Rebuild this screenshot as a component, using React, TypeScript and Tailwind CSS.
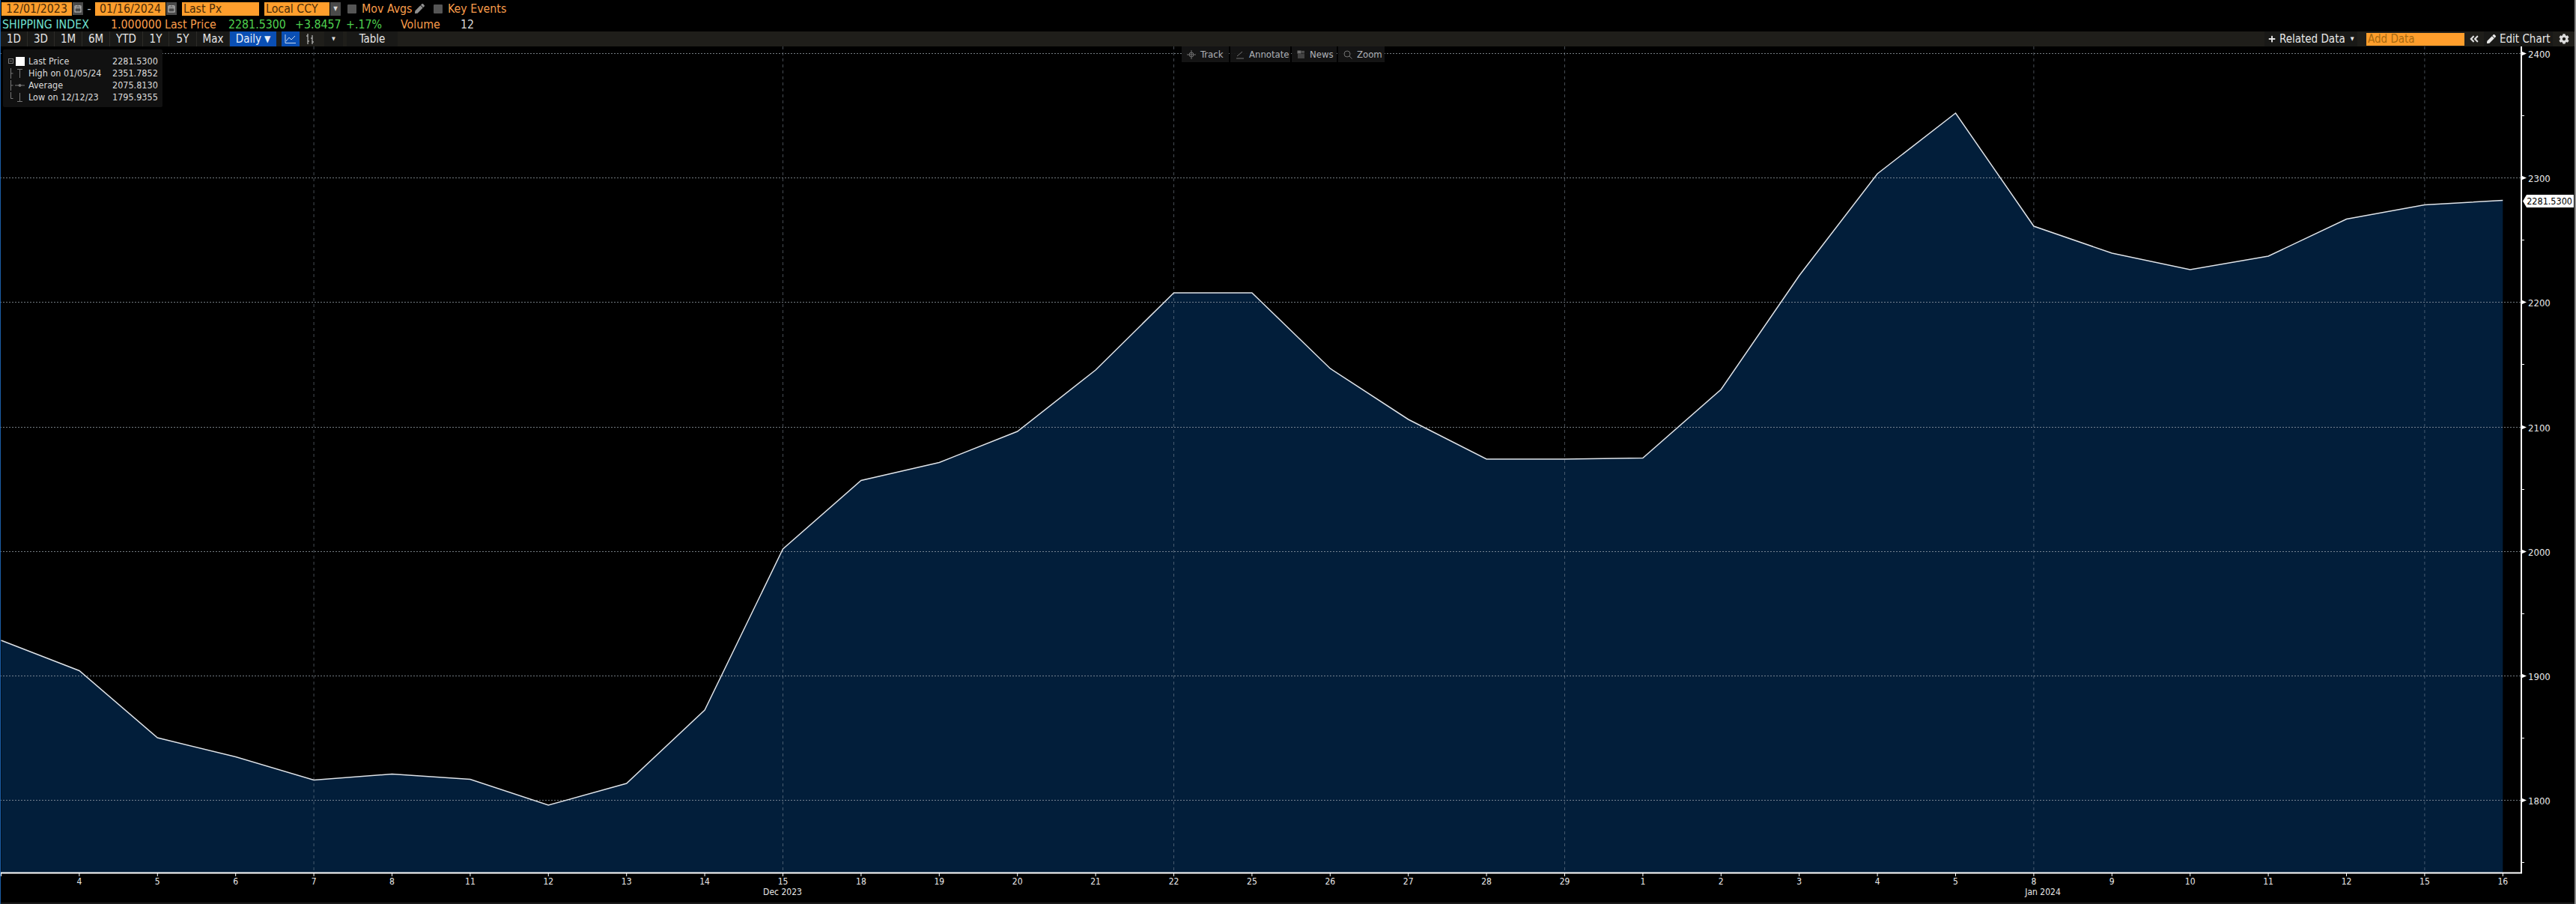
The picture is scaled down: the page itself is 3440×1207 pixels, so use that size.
import type { ReactNode } from 'react';
import { FaAngleDoubleLeft, FaCog, FaPen, FaPlus } from 'react-icons/fa';

const ORANGE = '#f99d4b';

// date labels, one per trading day
const days = ['', '4', '5', '6', '7', '8', '11', '12', '13', '14', '15', '18', '19', '20', '21', '22', '25', '26', '27', '28', '29', '1', '2', '3', '4', '5', '8', '9', '10', '11', '12', '15', '16'];

// y pixel of each close
const closes = [855, 895.5, 985, 1010.5, 1041.5, 1033.5, 1040.5, 1075, 1046, 948, 733, 641.5, 617.5, 576, 494, 391, 391, 492, 560, 613, 613, 611.5, 520, 368, 232, 151, 302, 338, 360, 342, 292.5, 273.5, 267.5];

const stepX = 104.4;
const xAt = (i: number) => 1.5 + i * stepX;
const line = closes.map((y, i) => xAt(i) + ',' + y).join(' ');
const area = '1.5,1165 ' + line + ' ' + xAt(32) + ',1165';

const gridY = [71.5, 237.5, 403.5, 570.5, 736.5, 902.5, 1068.5];
const gridDays = [4, 10, 15, 20, 26, 31];
const prices = ['2400', '2300', '2200', '2100', '2000', '1900', '1800'];

function CalendarButton() {
  return (
    <div className="w-[14px] h-[17px] bg-[#4a4a4a] flex items-center justify-center">
      <svg width="10" height="11" viewBox="0 0 10 11" fill="none" stroke="#c8c8c8">
        <rect x="1" y="2" width="8" height="8" />
        <path d="M1 4.5h8M3 1v2M7 1v2" />
      </svg>
    </div>
  );
}

function Check() {
  return <div className="w-[12px] h-[12px] rounded-[1px] bg-[#555555]" />;
}

function Range({ label, w }: { label: string; w: string }) {
  return <div className={'h-[20px] flex items-center justify-center bg-[#191917] border-r border-[#2c2b27] text-[#e6e6e6] ' + w}>{label}</div>;
}

function ToolItem({ label, icon, w }: { label: string; icon: ReactNode; w: string }) {
  return (
    <div className={'h-[21px] flex items-center gap-[6px] pl-[7px] bg-[#161616] text-[#b9bcc0] ' + w}>
      {icon}
      <span>{label}</span>
    </div>
  );
}

function LegendRow({ icon, label, value }: { icon: ReactNode; label: string; value: string }) {
  return (
    <div className="h-[16px] flex items-center">
      <div className="w-[34px] flex justify-end pr-[4px]">{icon}</div>
      <span className="w-[112px] whitespace-nowrap">{label}</span>
      <span className="w-[60px] text-right">{value}</span>
    </div>
  );
}

function Chart() {
  return (
    <svg viewBox="1 62 3437 1143" className="absolute inset-0 w-full h-full">
      <polygon points={area} fill="#021e3a" />
      {gridY.map((y) => (
        <line key={y} x1="0" x2="3366" y1={y} y2={y} stroke="#9aa4ad" strokeWidth="1" strokeDasharray="2 2" opacity="0.75" />
      ))}
      {gridDays.map((d) => (
        <line key={d} x1={xAt(d)} x2={xAt(d)} y1="62" y2="1165" stroke="#8b98a5" strokeWidth="1" strokeDasharray="4 4" opacity="0.5" />
      ))}
      <polyline points={line} fill="none" stroke="#dfe3e8" strokeWidth="1.5" />
      <path d="M0 1165.5H3367V62" fill="none" stroke="#ffffff" strokeWidth="2" />
      {days.map((d, i) => (
        <g key={i}>
          <line x1={xAt(i)} x2={xAt(i)} y1="1165" y2="1170" stroke="#ffffff" />
          <text x={xAt(i)} y="1181" textAnchor="middle" fontSize="12" fill="#e8e8e8">{d}</text>
        </g>
      ))}
      <text x="1045" y="1195" textAnchor="middle" fontSize="12" fill="#e8e8e8">Dec 2023</text>
      <text x="2728" y="1195" textAnchor="middle" fontSize="12" fill="#e8e8e8">Jan 2024</text>
      {gridY.map((y, i) => (
        <g key={y}>
          <path d={'M3367 ' + (y - 3) + 'L3374 ' + y + 'L3367 ' + (y + 3) + 'Z'} fill="#ffffff" />
          <text x="3376" y={y + 5} fontSize="13" fill="#e8e8e8">{prices[i]}</text>
          <line x1="3367" x2="3371" y1={y + 83} y2={y + 83} stroke="#ffffff" />
        </g>
      ))}
    </svg>
  );
}

export default function App() {
  return (
    <div className="w-[3440px] h-[1207px] bg-black flex flex-col overflow-hidden font-['DejaVu_Sans'] font-stretch-condensed border-l border-[#1c5fa8] border-r-2 border-r-[#8a8a8a]">
      {/* inputs row */}
      <div className="h-[24px] flex items-start pt-[3px] text-[15.8px] leading-[18px]">
        <div className="w-[94px] ml-[1px] h-[18px] bg-[#ff9e2c] text-[#4a2c08] text-center">12/01/2023</div>
        <div className="ml-[1px]"><CalendarButton /></div>
        <div className="w-[16px] text-center text-[#c0c0c0]">-</div>
        <div className="w-[94px] h-[18px] bg-[#ff9e2c] text-[#4a2c08] text-center">01/16/2024</div>
        <div className="ml-[1px]"><CalendarButton /></div>
        <div className="w-[103px] ml-[7px] h-[18px] bg-[#ff9e2c] text-[#4a2c08] pl-[2px]">Last Px</div>
        <div className="w-[87px] ml-[7px] h-[18px] bg-[#ff9e2c] text-[#4a2c08] pl-[2px]">Local CCY</div>
        <div className="w-[14px] h-[18px] ml-[1px] bg-[#4a4a4a] flex items-center justify-center text-[8px] text-[#ddd]">▼</div>
        <div className="ml-[9px] mt-[3px]"><Check /></div>
        <span className="ml-[7px] w-[71px] whitespace-nowrap" style={{ color: ORANGE }}>Mov Avgs</span>
        <FaPen className="mt-[2px] text-[13px] text-[#8f8f8f]" />
        <div className="ml-[12px] mt-[3px]"><Check /></div>
        <span className="ml-[7px] whitespace-nowrap" style={{ color: ORANGE }}>Key Events</span>
      </div>
      {/* quote row */}
      <div className="h-[18px] flex items-center text-[15.8px] whitespace-nowrap pl-[2px]">
        <span className="w-[145px] text-[#70e0d0]">SHIPPING INDEX</span>
        <span className="w-[72px]" style={{ color: ORANGE }}>1.000000</span>
        <span className="w-[85px]" style={{ color: ORANGE }}>Last Price</span>
        <span className="w-[89px] text-[#4fd14f]">2281.5300</span>
        <span className="w-[68px] text-[#4fd14f]">+3.8457</span>
        <span className="w-[73px] text-[#4fd14f]">+.17%</span>
        <span className="w-[80px]" style={{ color: ORANGE }}>Volume</span>
        <span className="text-[#d8d8d8]">12</span>
      </div>
      {/* range row */}
      <div className="h-[20px] flex items-center justify-between bg-[#1f1e1a] text-[15px] whitespace-nowrap">
        <div className="flex items-center">
          <Range label="1D" w="w-[36px]" />
          <Range label="3D" w="w-[36px]" />
          <Range label="1M" w="w-[37px]" />
          <Range label="6M" w="w-[37px]" />
          <Range label="YTD" w="w-[44px]" />
          <Range label="1Y" w="w-[35px]" />
          <Range label="5Y" w="w-[37px]" />
          <Range label="Max" w="w-[44px]" />
          <div className="w-[62px] h-[20px] flex items-center justify-center gap-[4px] bg-[#0a4fb4] text-[#e8eef8]">Daily <span className="text-[12px]">▼</span></div>
          <div className="w-[24px] h-[20px] ml-[7px] bg-[#0a4fb4] flex items-center justify-center">
            <svg width="16" height="14" viewBox="0 0 16 14" fill="none" stroke="#c8d8f0"><path d="M1 1v11.5h14M2 10l4-5 3 3 5-5" /></svg>
          </div>
          <div className="w-[21px] h-[20px] ml-[3px] flex items-center justify-center">
            <svg width="14" height="16" viewBox="0 0 14 16" fill="none" stroke="#d8d8d8"><path d="M4 1v14M2 4h2M4 11h2M10 3v12M8 7h2M10 12h2" /></svg>
          </div>
          <div className="w-[25px] h-[20px] ml-[9px] bg-[#191917] flex items-center justify-center text-[7px] text-[#ddd]">▼</div>
          <div className="w-[68px] h-[20px] ml-[5px] bg-[#191917] flex items-center justify-center text-[#e6e6e6]">Table</div>
        </div>
        <div className="flex items-center pr-[2px]">
          <div className="w-[124px] h-[20px] bg-[#191917] flex items-center gap-[5px] pl-[5px] text-[#e8e8e8]">
            <FaPlus className="text-[10px]" />
            <span>Related Data</span>
            <span className="text-[7px] ml-[2px]">▼</span>
          </div>
          <div className="w-[131px] h-[17px] ml-[12px] bg-[#ff9e2c] text-[#a86a10] pl-[2px] leading-[17px]">Add Data</div>
          <div className="w-[21px] h-[20px] ml-[2px] flex items-center justify-center text-[#dcdcdc]"><FaAngleDoubleLeft className="text-[14px]" /></div>
          <div className="w-[92px] h-[20px] ml-[3px] bg-[#191917] flex items-center gap-[5px] pl-[4px] text-[#e8e8e8]">
            <FaPen className="text-[12px]" />
            <span>Edit Chart</span>
          </div>
          <div className="w-[25px] h-[20px] ml-[2px] flex items-center justify-center text-[#dcdcdc]"><FaCog className="text-[14px]" /></div>
        </div>
      </div>
      {/* chart */}
      <div className="relative flex-1">
        <Chart />
        <div className="absolute left-[3px] top-[4px] w-[213px] h-[77px] bg-[#111111] rounded-[2px] text-[12.5px] text-[#dcdcdc] pt-[8px]">
          <LegendRow
            label="Last Price"
            value="2281.5300"
            icon={
              <svg width="24" height="12" viewBox="0 0 24 12" fill="none" stroke="#777">
                <rect x="1.5" y="2.5" width="6" height="6" />
                <path d="M3 5.5h3" />
                <rect x="11" y="0" width="12" height="12" fill="#ffffff" stroke="none" />
              </svg>
            }
          />
          <LegendRow
            label="High on 01/05/24"
            value="2351.7852"
            icon={
              <svg width="24" height="14" viewBox="0 0 24 14" fill="none" stroke="#777">
                <path d="M4.5 0v14M4.5 7h3M13 1.5h7M16.5 1.5V13" />
              </svg>
            }
          />
          <LegendRow
            label="Average"
            value="2075.8130"
            icon={
              <svg width="24" height="14" viewBox="0 0 24 14" fill="none" stroke="#777">
                <path d="M4.5 0v14M4.5 7h3M10 7h13" />
                <circle cx="16.5" cy="7" r="1.5" fill="#777" />
              </svg>
            }
          />
          <LegendRow
            label="Low on 12/12/23"
            value="1795.9355"
            icon={
              <svg width="24" height="14" viewBox="0 0 24 14" fill="none" stroke="#777">
                <path d="M4.5 0v8.5h3M13 12.5h7M16.5 1v11.5" />
              </svg>
            }
          />
        </div>
        <div className="absolute left-[1577px] top-[0px] flex gap-[2px] text-[13px] opacity-95">
          <ToolItem
            label="Track"
            w="w-[63px]"
            icon={<svg width="12" height="12" viewBox="0 0 12 12" fill="none" stroke="#777"><circle cx="6" cy="6" r="3" /><path d="M6 0v12M0 6h12" /></svg>}
          />
          <ToolItem
            label="Annotate"
            w="w-[80px]"
            icon={<svg width="12" height="12" viewBox="0 0 12 12" fill="none" stroke="#777"><path d="M1 11h10M2 8l7-6" /></svg>}
          />
          <ToolItem
            label="News"
            w="w-[60px]"
            icon={<svg width="11" height="11" viewBox="0 0 11 11" fill="none" stroke="#777"><rect x="1" y="1" width="4" height="3" fill="#777" /><path d="M6 1.5h4M6 3.5h4M1 6h9M1 8h9M1 10h9" /></svg>}
          />
          <ToolItem
            label="Zoom"
            w="w-[62px]"
            icon={<svg width="12" height="12" viewBox="0 0 12 12" fill="none" stroke="#777"><circle cx="5" cy="5" r="4" /><path d="M8 8l3.5 3.5" /></svg>}
          />
        </div>
        <div className="absolute left-[3368px] top-[198px] w-[68px] h-[17px] bg-white text-black text-[12.5px] leading-[17px] text-right pr-[2px] [clip-path:polygon(5px_0,100%_0,100%_100%,5px_100%,0_50%)]">
          2281.5300
        </div>
      </div>
      <div className="h-[2px] bg-[#1a1a1a]" />
    </div>
  );
}
